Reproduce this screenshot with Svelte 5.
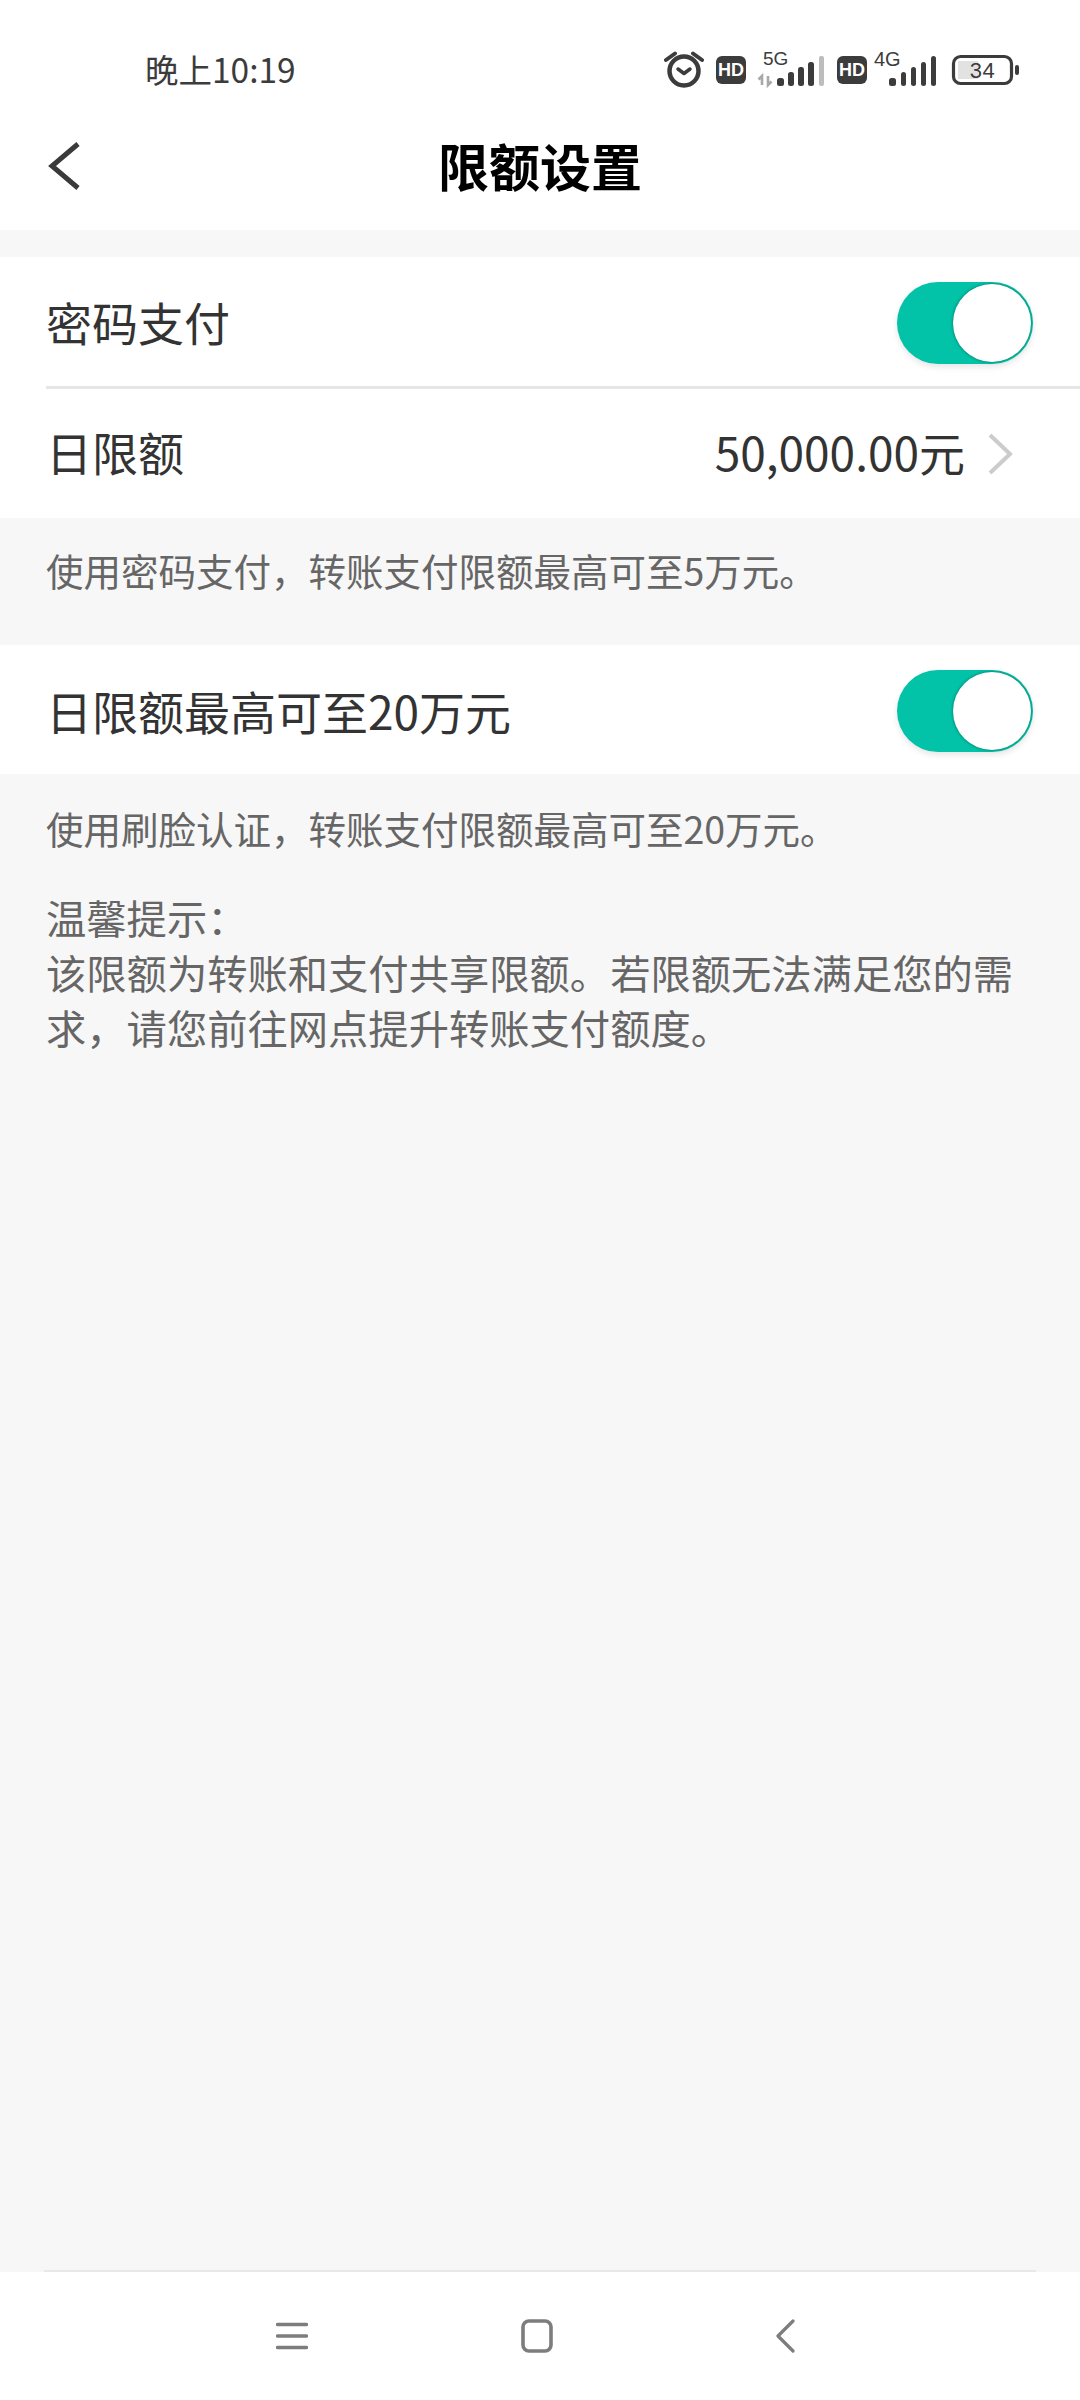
<script>
  let { hint = '使用密码支付，转账支付限额最高可至5万元。' } = $props();
</script>

<div class="screen">
  <div class="status">
    <span class="time">晚上10:19</span>
    <svg class="status-icons" width="370" height="56" viewBox="0 -6 370 56">
      <!-- alarm -->
      <g fill="none" stroke="#3c3c3c">
        <circle cx="20" cy="21" r="14.5" stroke-width="4.5" />
        <path d="M14 19l6 4.5 6-4.5" stroke-width="3.5" stroke-linecap="round" stroke-linejoin="round" />
        <path d="M2 10l9-6.5M38 10l-9-6.5" stroke-width="4" stroke-linecap="round" />
      </g>
      <!-- hd -->
      <rect x="52" y="6" width="30" height="28" rx="6" fill="#3c3c3c" />
      <text x="67" y="26" class="hd">HD</text>
      <text x="99" y="15" class="net">5G</text>
      <path d="M98 35v-9l-3.5 3.5M104 26v9l3.5-3.5" fill="none" stroke="#a8a8a8" stroke-width="2.6" />
      <g fill="#3c3c3c">
        <rect x="113" y="28" width="7" height="8" rx="2.5" />
        <rect x="124" y="22" width="6" height="14" rx="2.5" />
        <rect x="134" y="17" width="6" height="19" rx="2.5" />
        <rect x="144" y="12" width="6" height="24" rx="2.5" />
      </g>
      <rect x="155" y="6" width="5" height="30" rx="2" fill="#bdbdbd" />
      <rect x="173" y="6" width="30" height="28" rx="6" fill="#3c3c3c" />
      <text x="188" y="26" class="hd">HD</text>
      <text x="210" y="16" class="net big">4G</text>
      <g fill="#3c3c3c">
        <rect x="225" y="28" width="7" height="8" rx="2.5" />
        <rect x="237" y="22" width="5" height="14" rx="2.5" />
        <rect x="247" y="17" width="5" height="19" rx="2.5" />
        <rect x="257" y="12" width="5" height="24" rx="2.5" />
        <rect x="267" y="6" width="5" height="30" rx="2.5" />
      </g>
      <!-- battery -->
      <rect x="289.5" y="6.5" width="58" height="27" rx="7" fill="none" stroke="#3c3c3c" stroke-width="3.2" />
      <rect x="294" y="11" width="20" height="18" fill="#e2e2e2" />
      <rect x="351" y="15" width="4" height="10" rx="2" fill="#3c3c3c" />
      <text x="318.5" y="28" class="batt">34</text>
    </svg>
  </div>

  <header class="header">
    <svg class="back" width="32" height="48" viewBox="0 0 32 48">
      <path d="M30 2L4 24l26 22" fill="none" stroke="#3a3a3a" stroke-width="5" />
    </svg>
    <h1>限额设置</h1>
  </header>

  <section class="card first">
    <div class="row top">
      <span>密码支付</span>
      <div class="toggle"><i></i></div>
    </div>
    <div class="row amount">
      <span>日限额</span>
      <div class="value">
        <span>50,000.00元</span>
        <svg width="26" height="42" viewBox="0 0 26 42">
          <path d="M3 2l20 19L3 40" fill="none" stroke="#cccccc" stroke-width="4" />
        </svg>
      </div>
    </div>
  </section>

  <p class="hint one">{hint}</p>

  <section class="card">
    <div class="row solo">
      <span>日限额最高可至20万元</span>
      <div class="toggle"><i></i></div>
    </div>
  </section>

  <p class="hint two">使用刷脸认证，转账支付限额最高可至20万元。</p>
  <p class="tips">温馨提示：<br />该限额为转账和支付共享限额。若限额无法满足您的需求，请您前往网点提升转账支付额度。</p>

  <div class="bottom">
    <div class="nav-line"></div>
    <nav class="nav">
      <svg width="32" height="28" viewBox="0 0 32 28">
        <path d="M1.5 2.5h29M1.5 14h29M1.5 25.5h29" stroke="#7d7d7d" stroke-width="3.4" stroke-linecap="round" />
      </svg>
      <svg width="32" height="34" viewBox="0 0 32 34">
        <rect x="2" y="2" width="28" height="30" rx="6" fill="none" stroke="#7d7d7d" stroke-width="3.6" />
      </svg>
      <svg width="20" height="34" viewBox="0 0 20 34">
        <path d="M18 2L3 17l15 15" fill="none" stroke="#7d7d7d" stroke-width="3.2" stroke-linecap="round" stroke-linejoin="round" />
      </svg>
    </nav>
  </div>
</div>

<style>
  :global(body) {
    margin: 0;
  }
  .screen {
    width: 1080px;
    height: 2400px;
    display: flex;
    flex-direction: column;
    background: #f7f7f7;
    font-family: "Noto Sans CJK SC", "Noto Sans", sans-serif;
    color: #333;
    overflow: hidden;
  }
  .status {
    height: 112px;
    flex: none;
    background: #fff;
    display: flex;
    align-items: flex-start;
    justify-content: space-between;
    padding: 44px 46px 0 145px;
    box-sizing: border-box;
  }
  .time {
    margin-top: 6px;
    font-size: 33.5px;
    line-height: 37px;
    color: #3c3c3c;
  }
  .status-icons {
    flex: none;
  }
  .hd {
    font: 700 18px "Liberation Sans", sans-serif;
    fill: #fff;
    text-anchor: middle;
  }
  .net {
    font: 400 19px "Liberation Sans", sans-serif;
    fill: #3c3c3c;
  }
  .net.big {
    font-size: 20px;
  }
  .batt {
    font: 400 22px "Liberation Sans", sans-serif;
    letter-spacing: 0.5px;
    fill: #3c3c3c;
    text-anchor: middle;
  }
  .header {
    height: 118px;
    flex: none;
    background: #fff;
    display: flex;
    align-items: center;
    justify-content: center;
    position: relative;
    padding-bottom: 12px;
    box-sizing: border-box;
  }
  .back {
    position: absolute;
    left: 48px;
    top: 30px;
  }
  h1 {
    margin: 0;
    font-size: 51px;
    font-weight: 700;
    color: #000;
  }
  .card {
    background: #fff;
    font-size: 46px;
    flex: none;
  }
  .first {
    margin-top: 27px;
  }
  .row {
    display: flex;
    align-items: center;
    justify-content: space-between;
    box-sizing: border-box;
  }
  .top {
    height: 132px;
    margin-left: 46px;
    padding: 3px 47px 0 0;
    border-bottom: 3px solid #e6e6e6;
  }
  .top span {
    padding-bottom: 5px;
  }
  .amount {
    height: 129px;
    padding: 0 67px 0 46px;
  }
  .amount span {
    padding-bottom: 5px;
  }
  .solo {
    height: 129px;
    padding: 3px 47px 0 46px;
  }
  .solo span {
    padding-bottom: 3px;
  }
  .value {
    display: flex;
    align-items: center;
    gap: 22px;
  }
  .value svg {
    display: block;
  }
  .toggle {
    width: 136px;
    height: 82px;
    border-radius: 41px;
    background: #02c2a8;
    position: relative;
    box-shadow: 0 3px 6px rgba(0, 0, 0, 0.1);
  }
  .toggle i {
    position: absolute;
    right: 2px;
    top: 2px;
    width: 78px;
    height: 78px;
    border-radius: 50%;
    background: #fff;
    box-shadow: 0 0 3px rgba(0, 50, 40, 0.6);
  }
  .hint,
  .tips {
    margin: 0;
    padding: 0 46px;
    color: #666;
  }
  .hint {
    font-size: 37.5px;
  }
  .hint.one {
    height: 127px;
    line-height: 104px;
  }
  .hint.two {
    height: 103px;
    line-height: 108px;
  }
  .tips {
    font-size: 40.3px;
    line-height: 55px;
    margin-top: 12px;
  }
  .bottom {
    margin-top: auto;
    flex: none;
  }
  .nav-line {
    height: 2px;
    margin: 0 44px;
    background: #e8e8e8;
  }
  .nav {
    height: 128px;
    background: #fff;
    display: flex;
    align-items: center;
    padding: 0 285px 0 276px;
  }
  .nav svg:nth-child(2) {
    margin-left: 213px;
  }
  .nav svg:last-child {
    margin-left: auto;
  }
</style>
